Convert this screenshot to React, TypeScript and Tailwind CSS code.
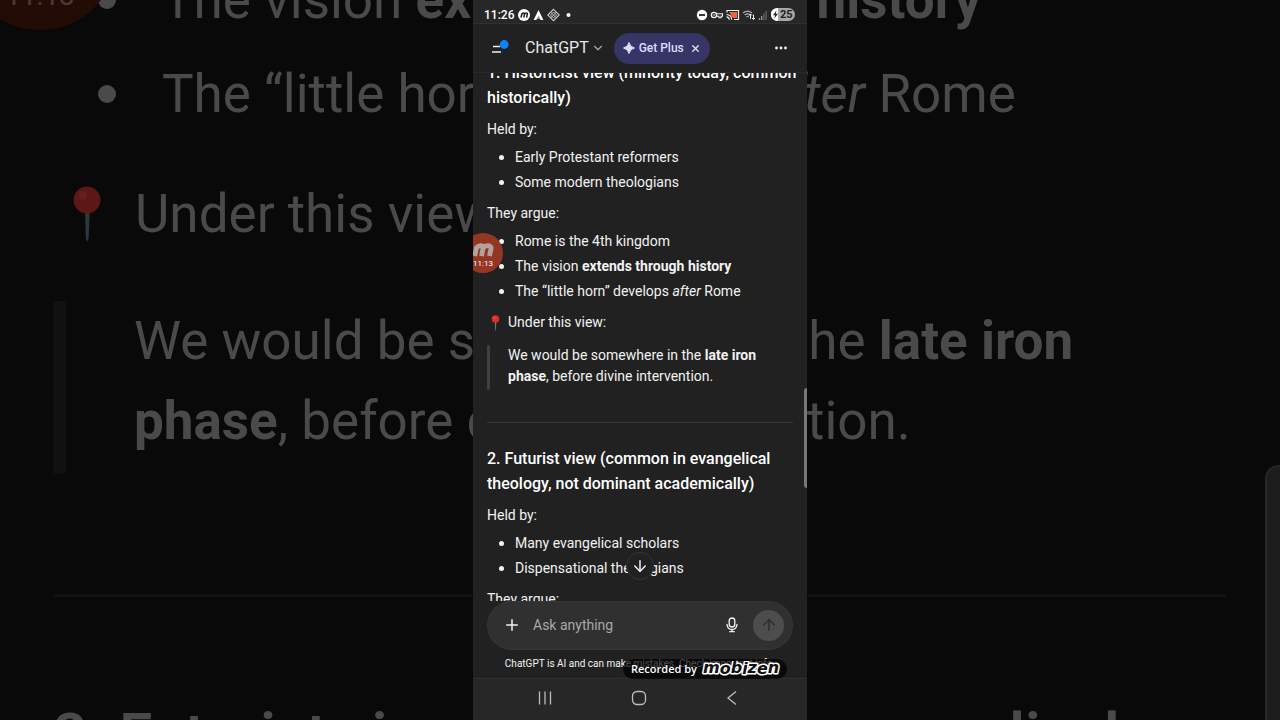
import type { ReactNode } from "react";
import { ArrowDown, ArrowUp, ChevronDown, Plus, X } from "lucide-react";

function Pin({ className }: { className: string }) {
  return (
    <svg viewBox="0 0 16 28" className={className} aria-hidden="true">
      <path d="M7 12h2.4l-.6 14-.7 2-.7-2z" fill="#5f7f8c" />
      <circle cx="8" cy="7" r="6.7" fill="#dd2e2e" />
      <circle cx="6" cy="4.8" r="2" fill="#e6483f" />
    </svg>
  );
}

function RecorderMark({ className }: { className: string }) {
  return (
    <svg viewBox="0 0 26 18" className={className} fill="none" aria-hidden="true">
      <path
        d="M4 15 6.2 4.5M5.6 6.500Q8.500 3 12 4q1.400.8.8 3.500L11.500 15M12.800 6.500Q16 3 20 4q2.200.8 1.600 3.500L20 15"
        stroke="currentColor"
        strokeWidth="5.200"
        strokeLinejoin="round"
      />
    </svg>
  );
}

function Backdrop() {
  return (
    <div aria-hidden="true" className="pointer-events-none absolute inset-0 overflow-hidden bg-[#090909] text-[#4a4a4a]">
      <div className="-mt-10 pl-[53px] pr-[54px] text-[53px] leading-20">
        <ul className="flex flex-col gap-[14px] whitespace-nowrap">
          <BackdropItem>
            The vision <b>extends through history</b>
          </BackdropItem>
          <BackdropItem>
            The “little horn” develops <i>after</i> Rome
          </BackdropItem>
        </ul>
        <p className="mt-10 flex items-center gap-8 whitespace-nowrap pl-[18px]">
          <Pin className="h-[60px] w-[32px] opacity-40" />
          Under this view:
        </p>
        <div className="mt-[47px] flex h-[173px] gap-[68px] whitespace-nowrap">
          <span className="w-[13px] rounded-sm bg-[#111111]" />
          <p>
            We would be somewhere in the <b>late iron</b>
            <br />
            <b>phase</b>, before divine intervention.
          </p>
        </div>
        <div className="mt-[120px] h-[3px] bg-[#111111]" />
        <p className="mt-[98px] whitespace-nowrap text-[60px] font-semibold">
          2. Futurist view (common in evangelical
        </p>
      </div>
      <div className="absolute -left-[37px] -top-[124px] flex h-[154px] w-[154px] flex-col items-center justify-end rounded-full bg-[#240c06] pb-[18px] text-[28px] leading-8 text-[#4b3a36]">
        11:13
      </div>
      <div className="absolute -right-3 top-[465px] h-[380px] w-[27px] rounded-2xl border-2 border-[#262626] bg-[#1d1d1d]" />
    </div>
  );
}

function BackdropItem({ children }: { children: ReactNode }) {
  return (
    <li className="flex items-center">
      <span className="ml-[45px] mr-[46px] h-[18px] w-[18px] shrink-0 rounded-full bg-[#4a4a4a]" />
      <span>{children}</span>
    </li>
  );
}

function StatusBar() {
  return (
    <div className="flex h-6 shrink-0 items-center border-b border-[#303030] bg-[#272727] pl-[11px] pr-3 pt-[6px] text-white">
      <span className="text-[12px] font-medium leading-4">11:26</span>
      <svg viewBox="0 0 56 14" className="ml-[3px] h-[14px] w-14" aria-hidden="true">
        <circle cx="7" cy="7" r="6" fill="#fff" />
        <path d="M4 9.500 5 5.200M4.900 6.200Q6.500 4.300 7.600 5.500L6.800 9.500M7.500 6.200Q9.300 4.300 10.400 5.500L9.600 9.500" stroke="#222" strokeWidth="1.500" fill="none" />
        <path d="M21.500 2 26.400 12H23.800L21.500 8 19.200 12H16.600z" fill="#fff" />
        <path d="M21.500 7.500 24 12 21.500 10.500 19 12z" fill="#aaa" />
        <path d="M36.500 1.300 42.200 7 36.500 12.700 30.800 7z" fill="none" stroke="#ccc" strokeWidth="1.100" />
        <path d="M36.500 4 39.500 7l-3 3-3-3zM33.700 4.200l5.600 5.600M39.300 4.200l-5.600 5.600" fill="none" stroke="#ccc" strokeWidth=".9" />
        <circle cx="51.500" cy="7" r="2" fill="#fff" />
      </svg>
      <svg viewBox="0 0 72 14" className="ml-auto h-[14px] w-[72px]" fill="none" aria-hidden="true">
        <circle cx="6" cy="7" r="5.200" fill="#fff" />
        <path d="M3 7h6" stroke="#222" strokeWidth="1.800" />
        <circle cx="18" cy="7" r="2.600" stroke="#eee" strokeWidth="1.400" />
        <circle cx="18" cy="7" r=".8" fill="#eee" />
        <path d="M20.500 5.800h6v2.400h-1.400v1.600h-2.200V8.200h-2.400" stroke="#eee" strokeWidth="1.100" />
        <path d="M31 4.500v-2h11.500v9H38" stroke="#eee" strokeWidth="1.200" />
        <path d="M33 4h8v6h-4z" fill="#f0653a" />
        <path d="M30.500 6.500q5 .3 5.300 5.200M30.500 8.800q2.600.2 2.900 2.900" stroke="#eee" strokeWidth="1.200" />
        <path d="M47 5q4.500-3.600 9 0M48.700 7q2.800-2.200 5.600 0M50.300 9q1.200-1 2.400 0" stroke="#aaa" strokeWidth="1.200" />
        <path d="M54.500 11V6m-1.500 1.500L54.500 6 56 7.500M57.500 6.500v5M56 10l1.500 1.500L59 10" stroke="#eee" />
        <path d="M63.500 12v-2M65.700 12V8" stroke="#999" strokeWidth="1.300" />
        <path d="M67.900 12V5.500M70.100 12V3" stroke="#666" strokeWidth="1.300" />
      </svg>
      <span className="ml-[3px] flex h-[13px] w-6 items-center rounded-full bg-[#a8a8a8] text-[11px] font-bold leading-3 text-[#222]">
        <svg viewBox="0 0 9 13" className="h-[13px] w-[9px] shrink-0" aria-hidden="true">
          <path d="M7 0Q0 0 0 6.500T7 13z" fill="#fff" />
          <path d="M5.500 2.500 2 7.200h2.100L3.400 10.500 7 5.800H4.800z" fill="#222" />
        </svg>
        25
      </span>
    </div>
  );
}

function Header() {
  return (
    <header className="flex h-[49px] shrink-0 items-center border-b border-[#292929] pl-[18px] pr-[19px]">
      <button aria-label="Open menu" className="shrink-0">
        <svg viewBox="0 0 18 18" className="h-[18px] w-[18px]" aria-hidden="true">
          <path d="M2 7.500h7M1 13h9" stroke="#eee" strokeWidth="1.400" />
          <circle cx="13.200" cy="5.500" r="4.400" fill="#0d84fa" />
        </svg>
      </button>
      <button className="ml-4 flex items-center gap-[2px] text-[16px] leading-5 text-[#e8e8e8]">
        ChatGPT
        <ChevronDown className="h-[14px] w-[14px] text-[#aaa]" strokeWidth={2} />
      </button>
      <button className="ml-[9px] flex h-[31px] w-24 items-center justify-center rounded-full bg-[#373566] text-[12px] font-medium leading-4 text-[#dddcff]">
        <svg viewBox="0 0 12 12" className="mr-1 h-3 w-3" fill="currentColor" aria-hidden="true">
          <path d="M6 .5Q7 5 11.500 6 7 7 6 11.500 5 7 .5 6 5 5 6 .5z" stroke="currentColor" strokeWidth="1" strokeLinejoin="round" />
        </svg>
        Get Plus
        <X className="ml-[6px] h-[11px] w-[11px]" strokeWidth={3} />
      </button>
      <button aria-label="More options" className="ml-auto">
        <svg viewBox="0 0 14 4" className="h-1 w-[14px]" fill="#f2f2f2" aria-hidden="true">
          <circle cx="2.500" cy="2" r="1.400" />
          <circle cx="7" cy="2" r="1.400" />
          <circle cx="11.500" cy="2" r="1.400" />
        </svg>
      </button>
    </header>
  );
}

function List({ items }: { items: ReactNode[] }) {
  return (
    <ul className="mt-[7px] mb-[10px] flex flex-col gap-1">
      {items.map((item, i) => (
        <li key={i} className="flex items-center gap-[11px] pl-3">
          <span className="h-[5px] w-[5px] shrink-0 rounded-full bg-[#f2f2f2]" />
          <span>{item}</span>
        </li>
      ))}
    </ul>
  );
}

function Answer() {
  return (
    <article className="-mt-[13px] px-[14px] text-[14px] leading-[21px]">
      <h2 className="mb-[9px] whitespace-nowrap text-[16px] font-medium leading-[25px] text-white">
        1. Historicist view (minority today, common
        <br />
        historically)
      </h2>
      <p>Held by:</p>
      <List items={["Early Protestant reformers", "Some modern theologians"]} />
      <p>They argue:</p>
      <List
        items={[
          "Rome is the 4th kingdom",
          <>
            The vision <b>extends through history</b>
          </>,
          <>
            The “little horn” develops <i>after</i> Rome
          </>,
        ]}
      />
      <p className="flex items-center gap-1 pl-1">
        <Pin className="h-4 w-[9px]" />
        <span className="pl-1">Under this view:</span>
      </p>
      <blockquote className="mt-3 flex gap-[18px]">
        <span className="w-[3px] shrink-0 rounded-sm bg-[#404040]" />
        <p className="pb-[3px]">
          We would be somewhere in the <b>late iron phase</b>, before divine intervention.
        </p>
      </blockquote>
      <hr className="mt-8 border-[#363636]" />
      <h2 className="mb-[9px] mt-[23px] whitespace-nowrap text-[16px] font-medium leading-[25px] text-white">
        2. Futurist view (common in evangelical
        <br />
        theology, not dominant academically)
      </h2>
      <p>Held by:</p>
      <List items={["Many evangelical scholars", "Dispensational theologians"]} />
      <p>They argue:</p>
    </article>
  );
}

function Composer() {
  return (
    <form className="mx-[14px] flex h-[49px] shrink-0 items-center rounded-full border border-[#363636] bg-[#303030] pb-px pl-[15px] pr-2">
      <button type="button" aria-label="Add attachment">
        <Plus className="h-[18px] w-[18px] text-[#f2f2f2]" strokeWidth={2} />
      </button>
      <input
        aria-label="Message"
        placeholder="Ask anything"
        className="ml-3 min-w-0 flex-1 bg-transparent text-[14px] leading-5 text-white outline-none placeholder:text-[#a8a8a8]"
      />
      <button type="button" aria-label="Dictate">
        <svg viewBox="0 0 14 18" className="h-[18px] w-[14px]" fill="none" stroke="#f2f2f2" strokeWidth="1.300" strokeLinecap="round" aria-hidden="true">
          <rect x="4.200" y="2" width="5.600" height="9" rx="2.800" />
          <path d="M2 8.500q.6 5 5 5t5-5M7 13.500v2M4.800 15.700h4.400" />
        </svg>
      </button>
      <button type="submit" aria-label="Send" className="ml-[14px] flex h-[31px] w-[31px] items-center justify-center rounded-full bg-[#4d4d4d]">
        <ArrowUp className="h-[18px] w-[18px] text-[#2e2e2e]" strokeWidth={2} />
      </button>
    </form>
  );
}

function NavBar() {
  return (
    <nav className="flex h-[42px] shrink-0 items-center justify-between border-t border-[#303030] bg-[#272727] pb-1 pl-16 pr-[67px] text-[#bdbdbd]">
      <button aria-label="Recent apps">
        <svg viewBox="0 0 16 16" className="h-4 w-4" stroke="currentColor" strokeWidth="1.300" aria-hidden="true">
          <path d="M2.500 1.500v13M8 1.500v13M13.500 1.500v13" />
        </svg>
      </button>
      <button aria-label="Home">
        <svg viewBox="0 0 16 16" className="h-4 w-4" fill="none" stroke="currentColor" strokeWidth="1.300" aria-hidden="true">
          <rect x="1.500" y="1.500" width="13" height="13" rx="4.500" />
        </svg>
      </button>
      <button aria-label="Back">
        <svg viewBox="0 0 16 16" className="h-4 w-4" fill="none" stroke="currentColor" strokeWidth="1.300" aria-hidden="true">
          <path d="M12 1.500 4 8l8 6.500" />
        </svg>
      </button>
    </nav>
  );
}

export default function App() {
  return (
    <div className="relative flex h-screen justify-center overflow-hidden bg-[#090909] font-['Roboto',sans-serif]">
      <Backdrop />
      <div className="relative flex w-full max-w-[334px] flex-col overflow-hidden bg-[#212121] text-[#f2f2f2]">
        <StatusBar />
        <Header />
        <div className="relative min-h-0 flex-1">
          <main className="h-full overflow-hidden">
            <Answer />
          </main>
          <button
            aria-label="Scroll to bottom"
            className="absolute bottom-[21px] left-1/2 flex h-7 w-7 -translate-x-1/2 items-center justify-center rounded-full border border-[#363636] bg-[#212121]"
          >
            <ArrowDown className="h-[18px] w-[18px]" strokeWidth={2} />
          </button>
          <div className="absolute right-0 top-[315px] h-[100px] w-[3px] rounded-l-sm bg-[#787878]" />
          <div className="absolute -left-[10px] top-40 flex h-10 w-10 flex-col items-center rounded-full bg-[#a03a25]/90 pt-[9px]">
            <RecorderMark className="h-[17px] w-6 text-[#b3a19b]" />
            <span className="text-[8px] leading-[10px] text-white">11:13</span>
          </div>
        </div>
        <Composer />
        <p className="flex h-7 shrink-0 items-center justify-center whitespace-nowrap text-[10px] leading-4">
          ChatGPT is AI and can make mistakes. Check important info.
        </p>
        <NavBar />
        <div className="absolute bottom-[41px] right-5 flex h-5 w-[164px] items-center rounded-full bg-black/70 pl-2 font-['Open_Sans',sans-serif] text-[11px] font-semibold leading-4 text-white">
          <span className="whitespace-nowrap">Recorded by</span>
          <svg viewBox="0 0 80 16" className="ml-1 h-4 w-20 shrink-0" role="img" aria-label="mobizen">
            <text
              x="2"
              y="12"
              fontFamily="'DejaVu Sans', sans-serif"
              fontSize="16"
              fontStyle="italic"
              fontWeight="700"
              fill="#111"
              stroke="#fff"
              strokeWidth="3"
              strokeLinejoin="round"
              paintOrder="stroke"
            >
              m<tspan dy="1">o</tspan>
              <tspan dy="-1">b</tspan>
              <tspan dy="1">i</tspan>
              <tspan dy="-1">z</tspan>
              <tspan dy="1">e</tspan>
              <tspan dy="-1">n</tspan>
            </text>
          </svg>
        </div>
      </div>
    </div>
  );
}
